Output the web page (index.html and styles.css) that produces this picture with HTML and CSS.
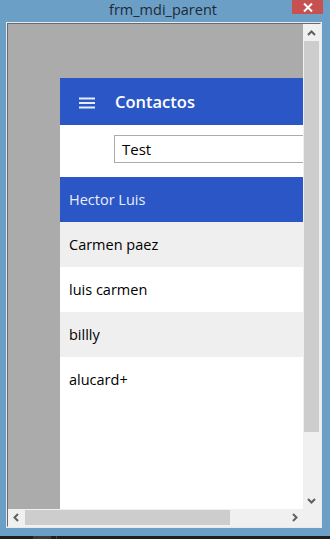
FILE: index.html
```html
<!DOCTYPE html>
<html>
<head>
<meta charset="utf-8">
<link rel="stylesheet" href="styles.css">
</head>
<body>
<div class="window">
  <div class="titlebar">
    <span class="title">frm_mdi_parent</span>
    <div class="close">
      <svg width="10" height="9" viewBox="0 0 10 9"><path d="M1 0.5 L9 8.5 M9 0.5 L1 8.5" stroke="#fff" stroke-width="2"/></svg>
    </div>
  </div>
  <div class="client">
    <div class="client-inner">
      <div class="viewport">
        <div class="child">
          <div class="appbar">
            <svg class="burger" width="16" height="12" viewBox="0 0 16 12"><rect x="0" y="0.5" width="16" height="2" fill="#e6ecf9"/><rect x="0" y="5" width="16" height="2" fill="#e6ecf9"/><rect x="0" y="9.5" width="16" height="2" fill="#e6ecf9"/></svg>
            <span class="apptitle">Contactos</span>
          </div>
          <div class="search">
            <div class="input">Test</div>
          </div>
          <ul class="list">
            <li class="row selected">Hector Luis</li>
            <li class="row alt">Carmen paez</li>
            <li class="row">luis carmen</li>
            <li class="row alt">billly</li>
            <li class="row">alucard+</li>
          </ul>
        </div>
      </div>
      <div class="vscroll">
        <div class="sbtn"><svg width="17" height="17" viewBox="0 0 17 17"><path d="M5 11 L8.5 7.5 L12 11" fill="none" stroke="#606060" stroke-width="2"/></svg></div>
        <div class="vthumb"></div>
        <div class="track"></div>
        <div class="sbtn"><svg width="17" height="17" viewBox="0 0 17 17"><path d="M5 7 L8.5 10.5 L12 7" fill="none" stroke="#606060" stroke-width="2"/></svg></div>
      </div>
      <div class="hscroll">
        <div class="sbtn"><svg width="17" height="17" viewBox="0 0 17 17"><path d="M10 5 L6.5 8.5 L10 12" fill="none" stroke="#606060" stroke-width="2"/></svg></div>
        <div class="hthumb"></div>
        <div class="track"></div>
        <div class="sbtn"><svg width="17" height="17" viewBox="0 0 17 17"><path d="M7 5 L10.5 8.5 L7 12" fill="none" stroke="#606060" stroke-width="2"/></svg></div>
      </div>
      <div class="corner"></div>
    </div>
  </div>
  <div class="bottomgap"></div>
  <div class="taskbar"><div class="tb-block"></div><div class="tb-line"></div></div>
</div>
</body>
</html>
```
FILE: styles.css
```css
* { box-sizing: border-box; }
html, body { margin: 0; padding: 0; }
body {
  width: 330px;
  height: 539px;
  overflow: hidden;
  background: #6c9fc6;
  font-family: "Open Sans", "Noto Sans", sans-serif;
}
.window {
  width: 330px;
  height: 539px;
  display: flex;
  flex-direction: column;
}
.titlebar {
  height: 22px;
  position: relative;
  display: flex;
  justify-content: center;
}
.title {
  font-size: 14.5px;
  line-height: 19px;
  color: #1e2a36;
  margin-left: -4px;
}
.close {
  position: absolute;
  left: 292px;
  top: 0;
  width: 31px;
  height: 14px;
  background: #c75050;
  display: flex;
  align-items: center;
  justify-content: center;
}
.client {
  margin-left: 6px;
  width: 316px;
  height: 506px;
  border: 1px solid #e4ecf2;
}
.client-inner {
  width: 314px;
  height: 504px;
  border-top: 1px solid #6a6a6a;
  border-left: 1px solid #6a6a6a;
  border-right: 1px solid #f0f0f0;
  border-bottom: 1px solid #f0f0f0;
  display: grid;
  grid-template-columns: 295px 17px;
  grid-template-rows: 485px 17px;
}
.viewport {
  background: #ababab;
  overflow: hidden;
}
.child {
  margin-left: 52px;
  margin-top: 54px;
  width: 300px;
  height: 480px;
  background: #fff;
}
.appbar {
  height: 47px;
  background: #2b56c5;
  display: flex;
  align-items: center;
  padding-left: 19px;
  gap: 20px;
}
.burger { display: block; margin-top: 2px; }
.apptitle {
  color: #fff;
  font-size: 16.5px;
  font-weight: 600;
  line-height: 20px;
}
.search {
  padding: 10px 0 14px 54px;
}
.input {
  height: 28px;
  border: 1px solid #ababab;
  border-right: none;
  padding-left: 7px;
  font-size: 15px;
  line-height: 27px;
  color: #000;
}
.list {
  list-style: none;
  margin: 0;
  padding: 0;
}
.row {
  height: 45px;
  line-height: 46px;
  padding-left: 9px;
  font-size: 14.5px;
  color: #000;
  background: #fff;
}
.row.alt { background: #efefef; }
.row.selected { background: #2b56c5; color: #e9eefa; }
.vscroll {
  background: #f0f0f0;
  display: flex;
  flex-direction: column;
}
.sbtn { width: 17px; height: 17px; flex: none; }
.sbtn svg { display: block; }
.vthumb {
  height: 391px;
  margin: 0 1px;
  background: #cdcdcd;
  flex: none;
}
.track { flex: 1; }
.hscroll {
  background: #f0f0f0;
  display: flex;
}
.hthumb {
  width: 205px;
  margin: 1px 0;
  background: #cdcdcd;
  flex: none;
}
.corner { background: #f0f0f0; }
.bottomgap { height: 8px; }
.taskbar {
  height: 3px;
  background: #1f1f1f;
  display: flex;
}
.tb-block { margin-left: 33px; width: 18px; background: #3a3a3a; }
.tb-line { margin-left: 5px; width: 1px; background: #444; }
```
